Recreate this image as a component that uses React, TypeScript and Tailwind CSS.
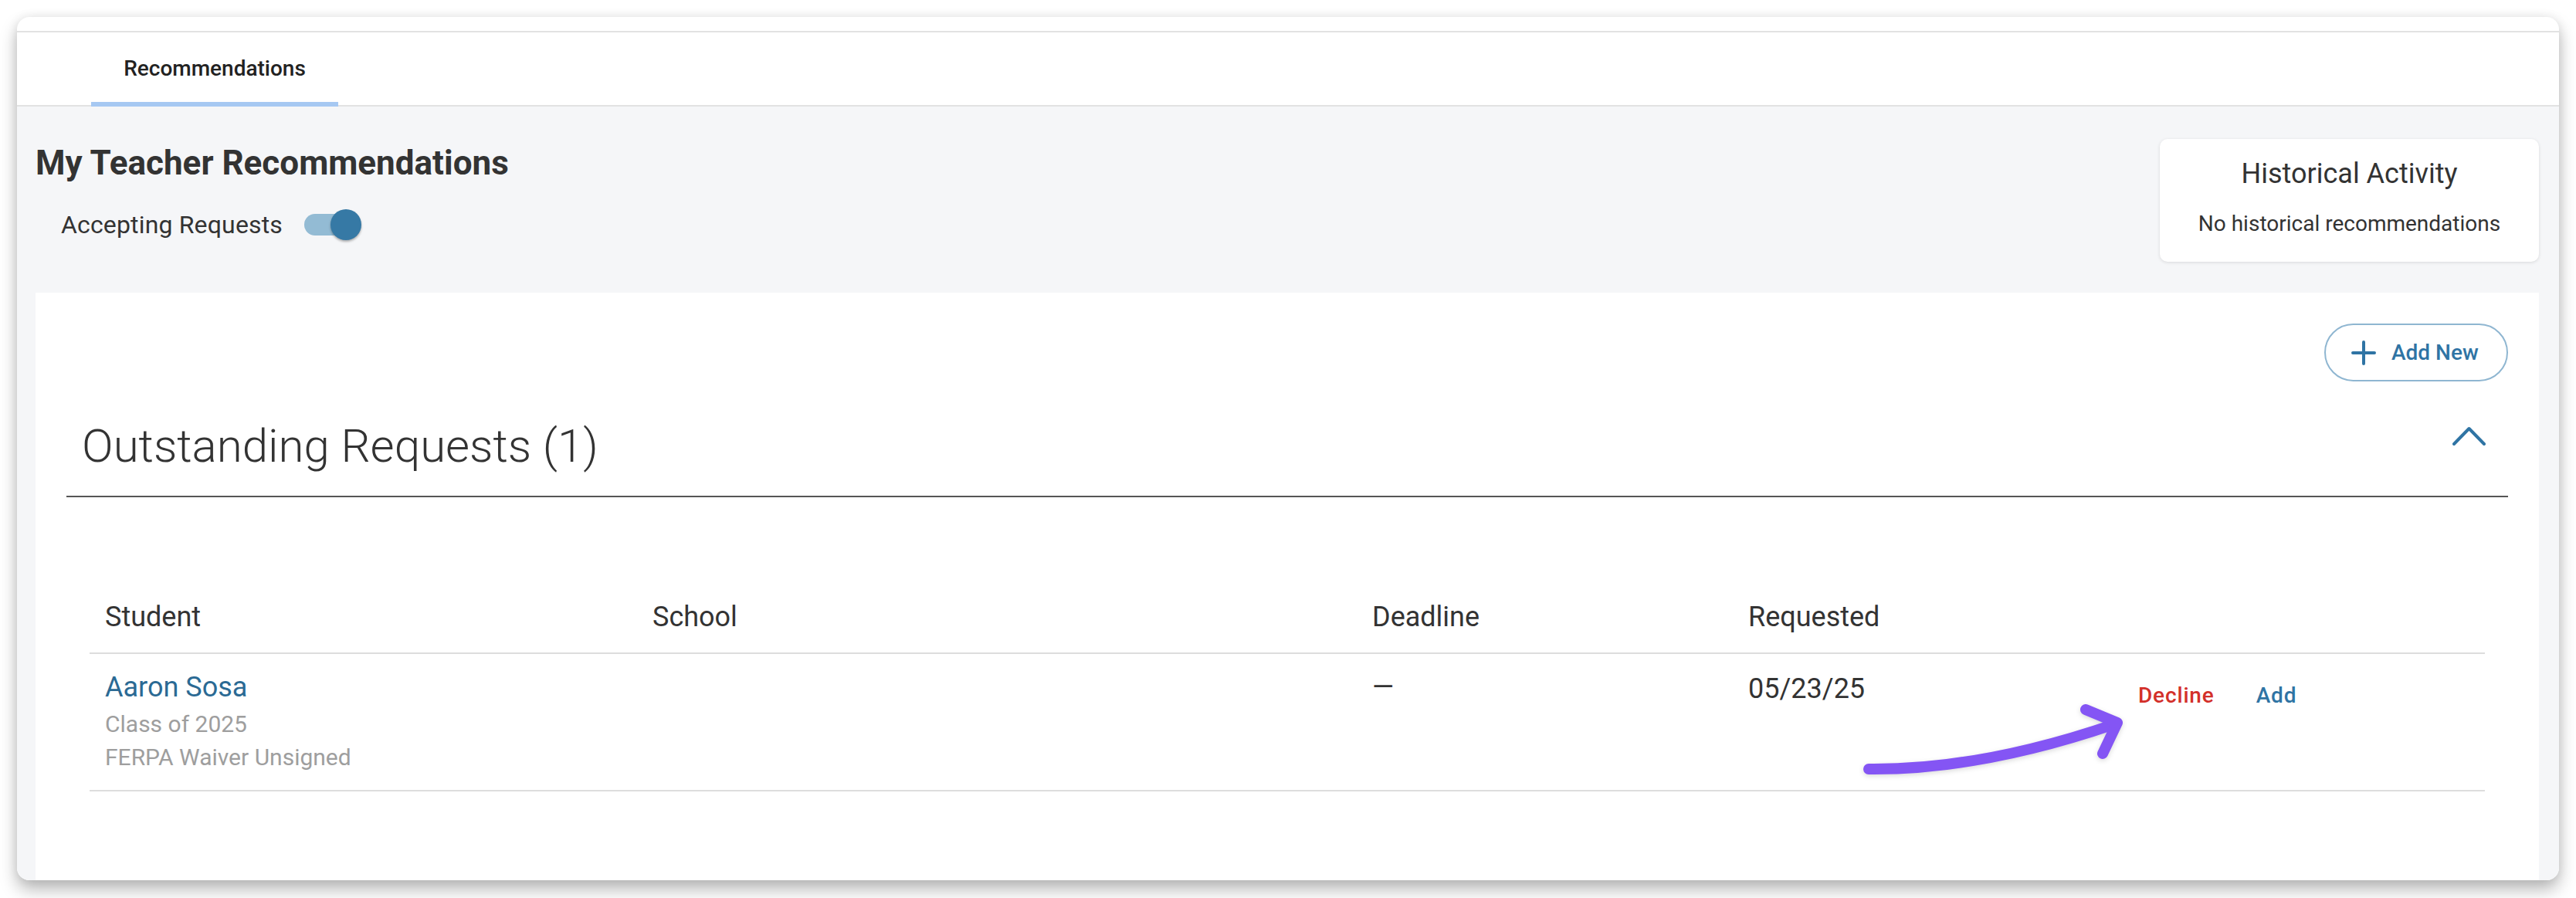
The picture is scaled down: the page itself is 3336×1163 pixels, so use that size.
import React from 'react';

function Toggle() {
  return (
    <div className="relative h-[40px] w-[74px]">
      <div className="absolute left-0 top-[6px] h-[28px] w-[68px] rounded-full bg-[#93bbd4]" />
      <div className="absolute left-[34px] top-0 h-[40px] w-[40px] rounded-full bg-[#3679a5] shadow-[0_2px_3px_rgba(0,0,0,0.3)]" />
    </div>
  );
}

function PlusIcon() {
  return (
    <svg width="32" height="32" viewBox="0 0 32 32" fill="none" stroke="#2f74a4" strokeWidth="4" strokeLinecap="round">
      <path d="M16 2v28M2 16h28" />
    </svg>
  );
}

function ChevronUp() {
  return (
    <svg width="43" height="25" viewBox="0 0 43 25" fill="none" stroke="#2f74a4" strokeWidth="4" strokeLinecap="round" strokeLinejoin="round">
      <path d="M2 23 21.5 3 41 23" />
    </svg>
  );
}

// purple hand-drawn arrow pointing at Decline
function Arrow() {
  return (
    <svg
      className="pointer-events-none absolute left-[2284px] top-[58px] drop-shadow-[0_2px_3px_rgba(0,0,0,0.15)]"
      width="360"
      height="105"
      viewBox="0 0 360 105"
      fill="none"
      stroke="#8455f4"
      strokeWidth="14"
      strokeLinecap="round"
      strokeLinejoin="round"
    >
      <path d="M20 91C120 92 230 70 338 33" />
      <path d="M301 14 342 31 323 71" />
    </svg>
  );
}

export default function App() {
  return (
    <div className="min-h-screen bg-white p-[22px] font-['Roboto',sans-serif] text-[#333]">
      <div className="h-[1118px] overflow-hidden rounded-[16px] bg-white shadow-[0_12px_22px_rgba(0,0,0,0.28),0_0_14px_rgba(0,0,0,0.08)]">
        <div className="h-[20px] border-b-2 border-[#e2e2e2]" />
        <nav className="flex h-[96px] border-b-2 border-[#e2e2e2] pl-[96px]">
          <div className="relative flex w-[320px] items-center justify-center text-[28px] font-medium text-[#222]">
            Recommendations
            <span className="absolute bottom-[-2px] left-0 right-0 h-[6px] bg-[#a6c8f2]" />
          </div>
        </nav>

        <div className="h-full bg-[#f5f6f8] pl-[24px] pr-[26px]">
          <div className="flex items-start justify-between pt-[42px]">
            <div className="pt-[9px]">
              <h1 className="text-[44px] font-bold leading-none text-[#333]">My Teacher Recommendations</h1>
              <div className="ml-[33px] mt-[38px] flex h-[40px] items-center gap-[28px]">
                <span className="text-[32px] leading-none tracking-[0.005em]">Accepting Requests</span>
                <Toggle />
              </div>
            </div>
            <div className="flex h-[159px] w-[491px] flex-col items-center rounded-[10px] bg-white pt-[27px] shadow-[0_1px_4px_rgba(0,0,0,0.12)]">
              <p className="text-[36px] leading-none">Historical Activity</p>
              <p className="mt-[33px] text-[28px] leading-none">No historical recommendations</p>
            </div>
          </div>

          <div className="mt-[40px] h-[800px] bg-white px-[40px] pt-[40px]">
            <div className="flex justify-end">
              <button className="flex h-[75px] w-[238px] items-center gap-[20px] rounded-full border-2 border-[#8fb6d1] pl-[33px] text-[28px] font-medium leading-none text-[#2f74a4]">
                <PlusIcon />
                Add New
              </button>
            </div>

            <div className="flex h-[150px] items-start justify-between border-b-2 border-[#555]">
              <h2 className="ml-[20px] mt-[54px] text-[60px] font-light leading-none text-[#333]">
                Outstanding Requests (1)
              </h2>
              <div className="mr-[29px] mt-[58px]">
                <ChevronUp />
              </div>
            </div>

            <div className="mx-[30px] mt-[137px]">
              <div className="grid grid-cols-[709px_932px_487px_504px_1fr] border-b-2 border-[#dddddd] pb-[28px] text-[36px] leading-none">
                <div className="pl-[20px]">Student</div>
                <div className="pl-[20px]">School</div>
                <div className="pl-[20px]">Deadline</div>
                <div className="pl-[20px]">Requested</div>
                <div />
              </div>

              <div className="relative grid h-[178px] grid-cols-[709px_932px_487px_504px_1fr] border-b-2 border-[#dddddd]">
                <div className="pl-[20px] pt-[25px]">
                  <p className="text-[36px] leading-none text-[#2b6a94]">Aaron Sosa</p>
                  <p className="mt-[15px] text-[30px] leading-none text-[#9e9e9e]">Class of 2025</p>
                  <p className="mt-[13px] text-[30px] leading-none text-[#9e9e9e]">FERPA Waiver Unsigned</p>
                </div>
                <div />
                <div className="pl-[20px] pt-[25px] text-[36px] leading-none">—</div>
                <div className="pl-[20px] pt-[27px] text-[36px] leading-none">05/23/25</div>
                <div className="flex items-start pl-[21px] pt-[40px] text-[28px] font-medium leading-none tracking-[0.03em]">
                  <button className="text-[#d3302a]">Decline</button>
                  <button className="ml-[54px] text-[#2f74a4]">Add</button>
                </div>
                <Arrow />
              </div>
            </div>
          </div>
        </div>
      </div>
    </div>
  );
}
